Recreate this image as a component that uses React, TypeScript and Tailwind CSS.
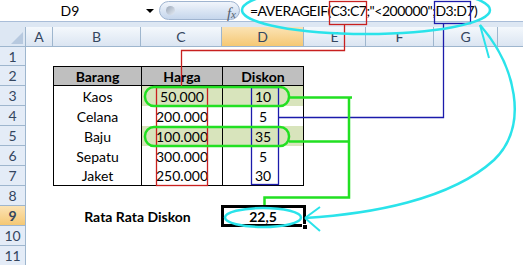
import React from 'react';

const COLS = [
  { key: 'A', w: 'w-[27px]' },
  { key: 'B', w: 'w-[88px]' },
  { key: 'C', w: 'w-[81px]' },
  { key: 'D', w: 'w-[82px]' },
  { key: 'E', w: 'w-[62px]' },
  { key: 'F', w: 'w-[68px]' },
  { key: 'G', w: 'w-[64px]' },
  { key: '', w: 'w-[64px]' },
];

const ITEMS = [
  { name: 'Kaos', price: '50.000', disc: '10', hl: true },
  { name: 'Celana', price: '200.000', disc: '5', hl: false },
  { name: 'Baju', price: '100.000', disc: '35', hl: true },
  { name: 'Sepatu', price: '300.000', disc: '5', hl: false },
  { name: 'Jaket', price: '250.000', disc: '30', hl: false },
];

const RowHead: React.FC<{ n: number; h: string; active?: boolean }> = ({ n, h, active }) => (
  <div
    className={`${h} w-[26px] shrink-0 flex items-center justify-center border-r border-b border-[#9eb6ce] text-[14px] text-[#34465f] ${
      active ? 'bg-gradient-to-b from-[#fbe3b4] to-[#f5c873]' : 'bg-[#e4ecf7]'
    }`}
  >
    {n}
  </div>
);

const Cell: React.FC<{ w: string; className?: string; children?: React.ReactNode }> = ({ w, className = '', children }) => (
  <div className={`${w} shrink-0 h-full flex items-center justify-center ${className}`}>{children}</div>
);

const EmptyRest = () => (
  <>
    <Cell w="w-[62px]" />
    <Cell w="w-[68px]" />
    <Cell w="w-[64px]" />
    <Cell w="w-[64px]" />
  </>
);

export default function App() {
  return (
    <div className="relative w-[523px] h-[265px] overflow-hidden bg-white font-['Lato',sans-serif] text-black">
      {/* Formula bar */}
      <div className="flex h-[22px] bg-white border-b border-[#a9bdd8]">
        <div className="relative w-[157px] shrink-0">
          <span className="absolute left-0 top-0 w-[140px] h-full flex items-center justify-center text-[14px]">D9</span>
          <span className="absolute left-[146px] top-[9px] w-0 h-0 border-x-[4px] border-x-transparent border-t-[4px] border-t-black" />
        </div>
        <div className="relative mt-[1px] ml-[2px] w-[81px] h-[19px] shrink-0 rounded-full border border-[#9fb4d0] bg-gradient-to-b from-[#f1f5fb] to-[#c5d6ec]">
          <span className="absolute left-[6px] top-[4px] w-[9px] h-[9px] rounded-full bg-gradient-to-br from-[#9aa6b6] to-[#e6edf6]" />
          <span className="absolute right-[3px] top-[0px] font-['Liberation_Serif',serif] italic text-[15px] text-[#55606e]">
            f<span className="text-[11px]">x</span>
          </span>
        </div>
        <div className="flex-1 flex items-center pl-[10px] text-[14px] tracking-[-0.5px] whitespace-nowrap">
          =AVERAGEIF(C3:C7;"&lt;200000";D3:D7)
        </div>
      </div>
      <div className="h-[5px] bg-[#dde7f3]" />

      {/* Column headers */}
      <div className="flex h-[20px]">
        <div className="relative w-[26px] shrink-0 border-r border-b border-[#9eb6ce] bg-[#dde7f3]">
          <span className="absolute right-[2px] bottom-[2px] w-0 h-0 border-l-[12px] border-l-transparent border-b-[12px] border-b-[#b7c9df]" />
        </div>
        {COLS.map((c, i) => (
          <div
            key={i}
            className={`${c.w} shrink-0 flex items-center justify-center border-r border-b border-[#9eb6ce] text-[14px] text-[#34465f] ${
              c.key === 'D' ? 'bg-gradient-to-b from-[#fbe3b4] to-[#f5c873]' : 'bg-gradient-to-b from-[#f4f8fc] to-[#dbe5f2]'
            }`}
          >
            {c.key}
          </div>
        ))}
      </div>

      {/* Row 1 */}
      <div className="flex h-[19px]">
        <RowHead n={1} h="h-[19px]" />
      </div>

      {/* Row 2: table header */}
      <div className="flex h-[20px] text-[14px]">
        <RowHead n={2} h="h-[20px]" />
        <Cell w="w-[27px]" />
        <Cell w="w-[88px]" className="bg-[#bfbfbf] font-bold border-l border-y border-black">Barang</Cell>
        <Cell w="w-[81px]" className="bg-[#bfbfbf] font-bold border-l border-y border-black">Harga</Cell>
        <Cell w="w-[82px]" className="bg-[#bfbfbf] font-bold border-x border-y border-black">Diskon</Cell>
        <EmptyRest />
      </div>

      {/* Rows 3-7 */}
      {ITEMS.map((it, i) => {
        const last = i === ITEMS.length - 1;
        const bottom = last ? 'border-b' : '';
        const bg = it.hl ? 'bg-[#d8e4bc]' : '';
        return (
          <div key={it.name} className="flex h-[20px] text-[14px]">
            <RowHead n={i + 3} h="h-[20px]" />
            <Cell w="w-[27px]" />
            <Cell w="w-[88px]" className={`border-l border-black ${bottom}`}>{it.name}</Cell>
            <Cell w="w-[81px]" className={`border-l border-black ${bottom} ${bg}`}>{it.price}</Cell>
            <Cell w="w-[82px]" className={`border-x border-black ${bottom} ${bg}`}>{it.disc}</Cell>
            <EmptyRest />
          </div>
        );
      })}

      {/* Row 8 */}
      <div className="flex h-[20px]">
        <RowHead n={8} h="h-[20px]" />
      </div>

      {/* Row 9 */}
      <div className="flex h-[20px] text-[14px] font-bold">
        <RowHead n={9} h="h-[20px]" active />
        <Cell w="w-[27px]" />
        <Cell w="w-[169px]">Rata Rata Diskon</Cell>
        <div className="relative w-[82px] shrink-0 h-full flex items-center justify-center">
          <span className="absolute -left-px -top-px -right-[2px] -bottom-px border-[3px] border-black" />
          <span className="absolute -right-[4px] -bottom-[4px] w-[6px] h-[6px] bg-black border border-white" />
          22,5
        </div>
      </div>

      {/* Rows 10-11 */}
      <div className="flex h-[20px]">
        <RowHead n={10} h="h-[20px]" />
      </div>
      <div className="flex h-[20px]">
        <RowHead n={11} h="h-[20px]" />
      </div>

      {/* Annotations */}
      <svg className="absolute inset-0 pointer-events-none" width="523" height="265" viewBox="0 0 523 265" fill="none">
        {/* red: C3:C7 */}
        <rect x="329.5" y="1.5" width="37" height="23" stroke="#c8201f" strokeWidth="1.3" />
        <path d="M344.5 25 V50.5 H181.5 V87" stroke="#c8201f" strokeWidth="1.3" />
        <rect x="156.5" y="87.5" width="51" height="98" stroke="#c8201f" strokeWidth="1.3" />
        {/* blue: D3:D7 */}
        <rect x="434.5" y="1.5" width="36" height="22" stroke="#1b1bab" strokeWidth="1.3" />
        <path d="M443.5 24 V117.5 H278" stroke="#1b1bab" strokeWidth="1.3" />
        <rect x="251.5" y="87.5" width="27" height="97" stroke="#1b1bab" strokeWidth="1.3" />
        {/* green */}
        <rect x="145" y="87" width="144" height="19" rx="9" stroke="#22e022" strokeWidth="2.5" />
        <rect x="145" y="127" width="144" height="19" rx="9" stroke="#22e022" strokeWidth="2.5" />
        <path d="M289 97.5 H352 M349 97.5 V197.5 H264.5 V205 M289 141.5 H349" stroke="#22e022" strokeWidth="2.5" />
        {/* cyan */}
        <ellipse cx="366" cy="10" rx="124" ry="24" stroke="#2ae3ea" strokeWidth="2.5" />
        <ellipse cx="263" cy="217.5" rx="38" ry="9.5" stroke="#2ae3ea" strokeWidth="2.5" />
        <path d="M480 25 C515 65 530 125 494 160 C450 200 370 214 305 218" stroke="#2ae3ea" strokeWidth="2.5" />
        <path d="M480 25 L489 58 M305 218 L320 207 M305 218 L320 231" stroke="#2ae3ea" strokeWidth="2" />
      </svg>
    </div>
  );
}
